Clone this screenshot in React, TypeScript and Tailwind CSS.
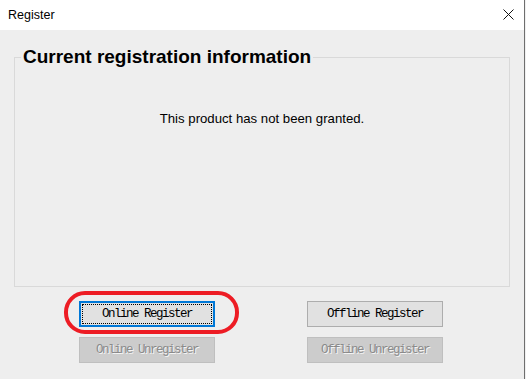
const mono = "font-['Liberation_Mono','Courier_New',monospace]";

function WinButton({ label, disabled, focused }: { label: string; disabled?: boolean; focused?: boolean }) {
  if (disabled) {
    return (
      <div className={`w-[136px] h-[26px] flex items-center justify-center bg-[#cccccc] border border-[#bfbfbf] text-[#8a8a8a] text-[12.5px] tracking-[-1.5px] [text-shadow:1px_1px_0_#f4f4f4] ${mono}`}>
        {label}
      </div>
    );
  }
  if (focused) {
    return (
      <div className="w-[136px] h-[26px] border-2 border-[#0078d7] bg-[#e1e1e1] p-[1px]">
        <div className={`w-full h-full flex items-center justify-center border border-dotted border-black text-black text-[12.5px] tracking-[-1.5px] ${mono}`}>
          {label}
        </div>
      </div>
    );
  }
  return (
    <div className={`w-[136px] h-[26px] flex items-center justify-center bg-[#e1e1e1] border border-[#adadad] text-black text-[12.5px] tracking-[-1.5px] ${mono}`}>
      {label}
    </div>
  );
}

export default function App() {
  return (
    <div className="w-[526px] h-[379px] bg-[#f0f0f0] overflow-hidden">
      <div className="w-[525px] h-[379px] border-r border-[#6e6e6e] flex flex-col bg-[#eeeeee]">
        {/* title bar */}
        <div className="h-[30px] shrink-0 bg-white flex items-center justify-between pl-[8px] pr-[10px]">
          <span className="text-[12.5px] text-black font-['Liberation_Sans',Arial,sans-serif]">Register</span>
          <svg width="11" height="11" viewBox="0 0 11 11" className="mt-[-1px]">
            <path d="M0.5 0.5 L10.5 10.5 M10.5 0.5 L0.5 10.5" stroke="#111" strokeWidth="1" fill="none" />
          </svg>
        </div>

        {/* body */}
        <div className="flex-1 pl-[14px] pt-[16px]">
          <fieldset className="w-[496px] h-[241px] border border-[#d9d9d9] font-['Liberation_Sans',Arial,sans-serif]">
            <legend className="ml-[6px] px-[2px] text-[19px] leading-[22px] font-bold text-black">
              Current registration information
            </legend>
            <p className="mt-[43px] text-center text-[13.2px] leading-[15px] text-black">
              This product has not been granted.
            </p>
          </fieldset>

          <div className="mt-[14px] ml-[65px] flex gap-x-[92px]">
            <div className="flex flex-col gap-y-[10px]">
              <div className="relative">
                <WinButton label="Online Register" focused />
                <div className="absolute -left-[15px] -top-[10px] w-[175px] h-[43px] border-[4px] border-[#ed1c24] rounded-[21px] pointer-events-none" />
              </div>
              <WinButton label="Online Unregister" disabled />
            </div>
            <div className="flex flex-col gap-y-[10px]">
              <WinButton label="Offline Register" />
              <WinButton label="Offline Unregister" disabled />
            </div>
          </div>
        </div>
      </div>
    </div>
  );
}
